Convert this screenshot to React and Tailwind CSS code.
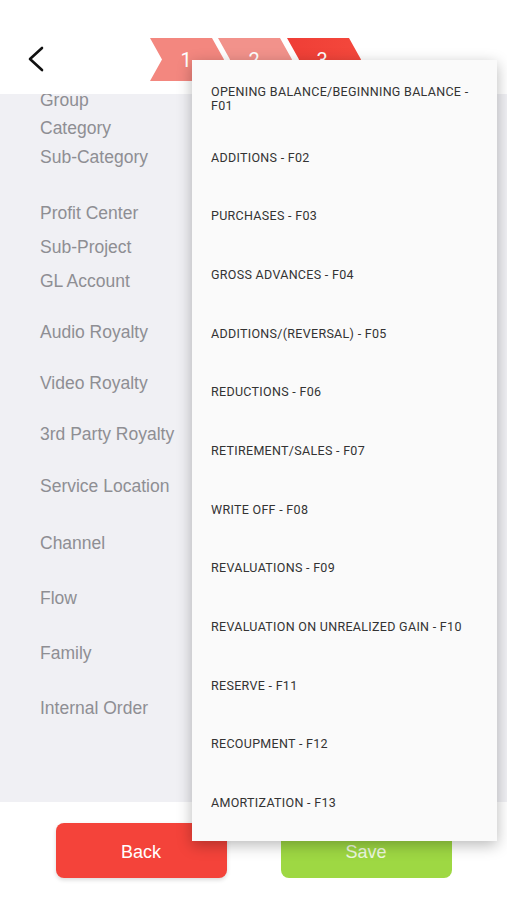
import React from "react";

const labels = [
  { text: "Group", mt: "mt-[-4px]" },
  { text: "Category", mt: "mt-[8px]" },
  { text: "Sub-Category", mt: "mt-[9px]" },
  { text: "Profit Center", mt: "mt-[36px]" },
  { text: "Sub-Project", mt: "mt-[14px]" },
  { text: "GL Account", mt: "mt-[14px]" },
  { text: "Audio Royalty", mt: "mt-[31px]" },
  { text: "Video Royalty", mt: "mt-[31px]" },
  { text: "3rd Party Royalty", mt: "mt-[31px]" },
  { text: "Service Location", mt: "mt-[32px]" },
  { text: "Channel", mt: "mt-[37px]" },
  { text: "Flow", mt: "mt-[35px]" },
  { text: "Family", mt: "mt-[35px]" },
  { text: "Internal Order", mt: "mt-[35px]" },
];

const flows = [
  "OPENING BALANCE/BEGINNING BALANCE - F01",
  "ADDITIONS - F02",
  "PURCHASES - F03",
  "GROSS ADVANCES - F04",
  "ADDITIONS/(REVERSAL) - F05",
  "REDUCTIONS - F06",
  "RETIREMENT/SALES - F07",
  "WRITE OFF - F08",
  "REVALUATIONS - F09",
  "REVALUATION ON UNREALIZED GAIN - F10",
  "RESERVE - F11",
  "RECOUPMENT - F12",
  "AMORTIZATION - F13",
];

// chevron: (x,0) (x+w,0) (x+w+d,h/2) (x+w,h) (x,h) (x+d,h/2)
const chevron = (x, w = 62, d = 12, h = 43) =>
  `${x},0 ${x + w},0 ${x + w + d},${h / 2} ${x + w},${h} ${x},${h} ${x + d},${h / 2}`;

function Steps() {
  return (
    <svg width="212" height="43" viewBox="0 0 212 43" className="block">
      <defs>
        <linearGradient id="g3" x1="0" x2="1" y1="0" y2="0">
          <stop offset="0" stopColor="#ef3e36" />
          <stop offset="1" stopColor="#f4483c" />
        </linearGradient>
      </defs>
      <polygon points={chevron(0)} fill="#f3877f" />
      <polygon points={chevron(68)} fill="#f2928b" />
      <polygon points={chevron(137)} fill="url(#g3)" />
      <text x="36" y="29" textAnchor="middle" fill="#fff" fontSize="20" fontFamily="Roboto, sans-serif">1</text>
      <text x="104" y="29" textAnchor="middle" fill="#fff" fontSize="20" fontFamily="Roboto, sans-serif">2</text>
      <text x="172" y="29" textAnchor="middle" fill="#fff" fontSize="20" fontFamily="Roboto, sans-serif">3</text>
    </svg>
  );
}

export default function App() {
  return (
    <div className="relative w-[507px] h-[900px] overflow-hidden bg-white font-['Liberation_Sans',Arial,sans-serif]">
      {/* header */}
      <div className="h-[94px] flex items-start bg-white relative z-10">
        <button className="mt-[46px] ml-[26px] w-[20px] h-[26px]">
          <svg width="20" height="26" viewBox="0 0 20 26">
            <polyline points="16,2 4,13 16,24" fill="none" stroke="#111" strokeWidth="2.6" strokeLinecap="round" strokeLinejoin="round" />
          </svg>
        </button>
        <div className="mt-[38px] ml-[104px]">
          <Steps />
        </div>
      </div>

      {/* body */}
      <div className="h-[708px] bg-[#f0f0f4] overflow-hidden">
        <div className="pl-[40px]">
          {labels.map((l) => (
            <div key={l.text} className={`${l.mt} text-[17.5px] leading-[20px] text-[#8e8e93]`}>
              {l.text}
            </div>
          ))}
        </div>
      </div>

      {/* footer */}
      <div className="flex justify-center gap-[54px] pt-[21px]">
        <button className="w-[171px] h-[55px] pt-[3px] rounded-[8px] bg-[#f4433a] text-white text-[18px] shadow-[0_2px_4px_rgba(0,0,0,0.15)]">
          Back
        </button>
        <button className="w-[171px] h-[55px] pt-[3px] rounded-[8px] bg-[#9ed843] text-[#eef8e0] text-[18px]">
          Save
        </button>
      </div>

      {/* dropdown menu */}
      <div className="absolute left-[192px] top-[60px] w-[305px] h-[781px] bg-[#fafafa] pt-[10px] shadow-[0_4px_14px_rgba(0,0,0,0.28)] z-20 font-['Roboto',sans-serif]">
        {flows.map((f, i) => (
          <div
            key={f}
            className={`${i === 0 ? "h-[58.5px]" : "h-[58.67px]"} flex items-center pl-[19px] pr-[22px] text-[12.5px] leading-[14px] text-[#333] tracking-[0.3px]`}
          >
            {f}
          </div>
        ))}
      </div>
    </div>
  );
}
